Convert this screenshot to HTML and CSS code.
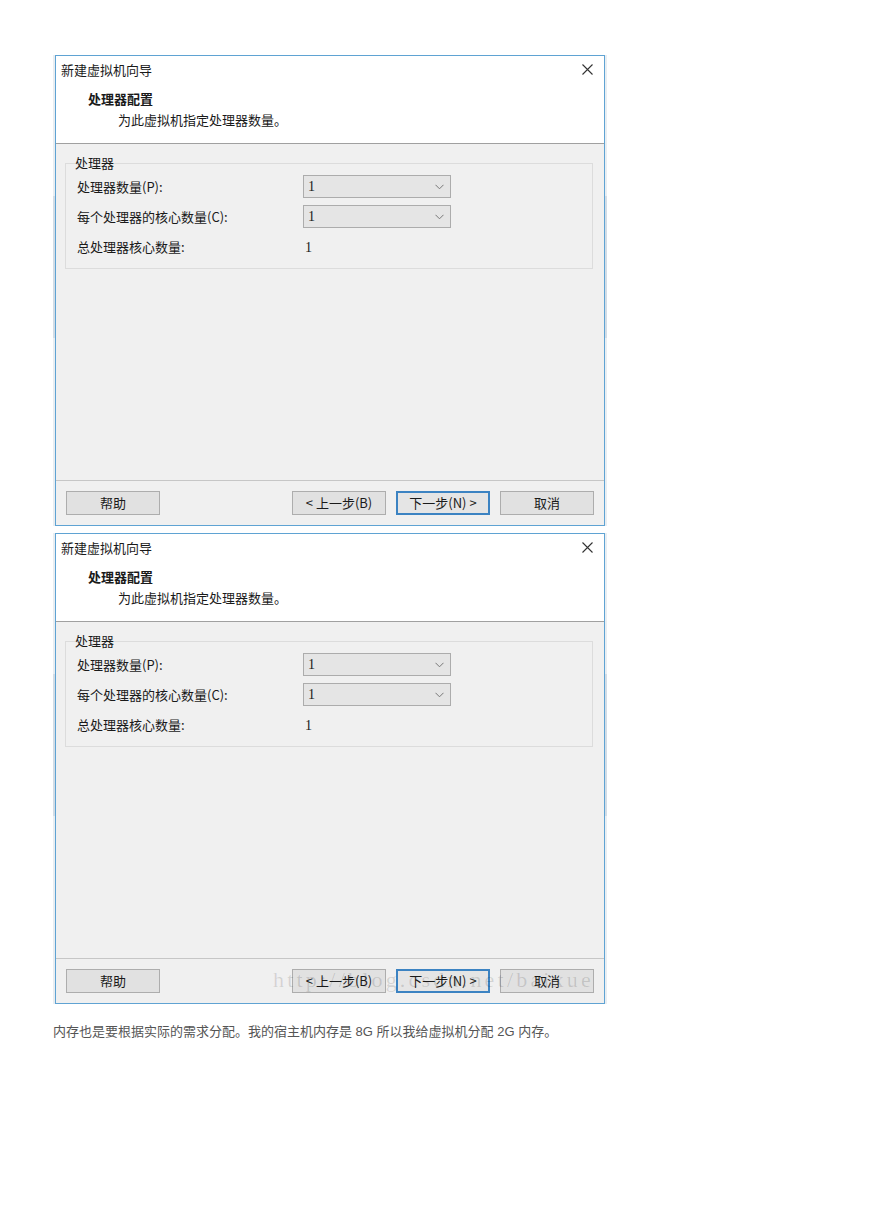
FILE: index.html
```html
<!DOCTYPE html>
<html lang="zh-CN">
<head>
  <meta charset="UTF-8">
  <meta name="viewport" content="width=device-width, initial-scale=1.0">
  <title>处理器配置</title>
  <link rel="stylesheet" href="styles.css">
</head>
<body>

<div class="page">

  <div class="shot">
    <div class="dialog">
      <div class="titlebar">
        <span class="title">新建虚拟机向导</span>
        <svg class="close" width="11" height="11" viewBox="0 0 11 11"><path d="M0.5 0.5 L10.5 10.5 M10.5 0.5 L0.5 10.5" stroke="#333" stroke-width="1.1" fill="none"/></svg>
      </div>
      <div class="header">
        <div class="head-title">处理器配置</div>
        <div class="head-sub">为此虚拟机指定处理器数量。</div>
      </div>
      <div class="body">
        <fieldset class="group">
          <legend>处理器</legend>
          <div class="row">
            <span class="label">处理器数量(P):</span>
            <div class="combo"><span>1</span><svg width="9" height="6" viewBox="0 0 9 6"><path d="M0.5 0.8 L4.5 4.8 L8.5 0.8" stroke="#777" fill="none"/></svg></div>
          </div>
          <div class="row">
            <span class="label">每个处理器的核心数量(C):</span>
            <div class="combo"><span>1</span><svg width="9" height="6" viewBox="0 0 9 6"><path d="M0.5 0.8 L4.5 4.8 L8.5 0.8" stroke="#777" fill="none"/></svg></div>
          </div>
          <div class="row row-last">
            <span class="label">总处理器核心数量:</span>
            <span class="value">1</span>
          </div>
        </fieldset>
      </div>
      <div class="footer">
        <button class="btn">帮助</button>
        <div class="spacer"></div>
        <button class="btn">&lt; 上一步(B)</button>
        <button class="btn btn-focus">下一步(N) &gt;</button>
        <button class="btn">取消</button>
      </div>
    </div>
  </div>

  <div class="shot">
    <div class="dialog">
      <div class="titlebar">
        <span class="title">新建虚拟机向导</span>
        <svg class="close" width="11" height="11" viewBox="0 0 11 11"><path d="M0.5 0.5 L10.5 10.5 M10.5 0.5 L0.5 10.5" stroke="#333" stroke-width="1.1" fill="none"/></svg>
      </div>
      <div class="header">
        <div class="head-title">处理器配置</div>
        <div class="head-sub">为此虚拟机指定处理器数量。</div>
      </div>
      <div class="body">
        <fieldset class="group">
          <legend>处理器</legend>
          <div class="row">
            <span class="label">处理器数量(P):</span>
            <div class="combo"><span>1</span><svg width="9" height="6" viewBox="0 0 9 6"><path d="M0.5 0.8 L4.5 4.8 L8.5 0.8" stroke="#777" fill="none"/></svg></div>
          </div>
          <div class="row">
            <span class="label">每个处理器的核心数量(C):</span>
            <div class="combo"><span>1</span><svg width="9" height="6" viewBox="0 0 9 6"><path d="M0.5 0.8 L4.5 4.8 L8.5 0.8" stroke="#777" fill="none"/></svg></div>
          </div>
          <div class="row row-last">
            <span class="label">总处理器核心数量:</span>
            <span class="value">1</span>
          </div>
        </fieldset>
      </div>
      <div class="footer">
        <button class="btn">帮助</button>
        <div class="spacer"></div>
        <button class="btn">&lt; 上一步(B)</button>
        <button class="btn btn-focus">下一步(N) &gt;</button>
        <button class="btn">取消</button>
        <span class="watermark">http://blog.csdn.net/baixue</span>
      </div>
    </div>
  </div>

  <p class="note">内存也是要根据实际的需求分配。我的宿主机内存是 8G 所以我给虚拟机分配 2G 内存。</p>

</div>

</body>
</html>
```

FILE: styles.css
```css
body {
  margin: 0;
  background: #fff;
  font-family: "Noto Sans CJK SC", "Liberation Sans", sans-serif;
  color: #1a1a1a;
}

.page {
  padding: 55px 0 0 53px;
}

.shot {
  width: 550px;
  padding: 0 2px;
  margin-bottom: 7px;
  background: linear-gradient(180deg, #e9eef2 0%, #e9eef2 30%, #d3dde6 30%, #d3dde6 60%, #e9eef2 60%);
}

.dialog {
  position: relative;
  width: 548px;
  height: 469px;
  border: 1px solid #5fa3d3;
  background: #f0f0f0;
  display: flex;
  flex-direction: column;
  font-size: 13px;
}

.titlebar {
  height: 27px;
  background: #fff;
  display: flex;
  align-items: center;
  padding: 0 11px 0 5px;
}

.title {
  flex: 1;
  line-height: 27px;
}

.header {
  height: 61px;
  box-sizing: border-box;
  background: #fff;
  border-bottom: 1px solid #a0a0a0;
  padding-top: 6px;
}

.head-title {
  font-weight: bold;
  line-height: 20px;
  padding-left: 32px;
}

.head-sub {
  line-height: 22px;
  padding-left: 62px;
}

.body {
  height: 337px;
  box-sizing: border-box;
  border-bottom: 1px solid #c6c6c6;
  padding: 11px 11px 0 9px;
}

.group {
  margin: 0;
  border: 1px solid #dcdcdc;
  padding: 0 0 6px 11px;
}

.group legend {
  padding: 0;
  margin-left: -2px;
  line-height: 16px;
}

.row {
  height: 30px;
  display: flex;
  align-items: center;
}

.row-last {
  height: 31px;
}

.label {
  width: 226px;
}

.combo {
  width: 148px;
  height: 23px;
  box-sizing: border-box;
  border: 1px solid #acacac;
  background: #e5e5e5;
  display: flex;
  align-items: center;
  justify-content: space-between;
  padding: 2px 6px 0 4px;
  font-family: "Liberation Serif", serif;
  font-size: 14px;
  color: #1a1a1a;
}

.combo svg {
  margin-top: -1px;
}

.value {
  padding: 2px 0 0 2px;
  font-family: "Liberation Serif", serif;
  font-size: 14px;
  color: #1a1a1a;
}

.footer {
  position: relative;
  flex: 1;
  display: flex;
  align-items: flex-start;
  gap: 10px;
  padding: 10px 10px 0 10px;
}

.spacer {
  flex: 1;
}

.btn {
  width: 94px;
  height: 24px;
  border: 1px solid #adadad;
  background: #e1e1e1;
  font-family: "Noto Sans CJK SC", "Liberation Sans", sans-serif;
  font-size: 13px;
  color: #1a1a1a;
  padding: 0;
  line-height: 20px;
}

.btn-focus {
  border: 2px solid #3c83c2;
  background: #e5e5e5;
}

.watermark {
  position: absolute;
  left: 217px;
  top: 8px;
  font-family: "Liberation Serif", serif;
  font-size: 22px;
  letter-spacing: 3.2px;
  color: rgba(0, 0, 0, 0.13);
  white-space: nowrap;
  pointer-events: none;
}

.note {
  margin: 17px 0 0 0;
  font-family: "Liberation Sans", "Noto Sans CJK SC", sans-serif;
  font-size: 13px;
  color: #555;
}
```
